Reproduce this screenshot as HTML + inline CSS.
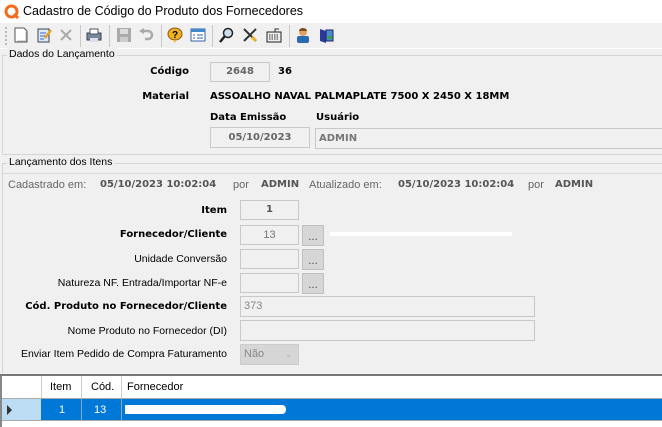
<!DOCTYPE html>
<html><head><meta charset="utf-8"><style>
*{margin:0;padding:0;box-sizing:border-box}
body{width:662px;height:427px;background:#f0f0f0;position:relative;overflow:hidden;font-family:"DejaVu Sans",Verdana,sans-serif;font-size:11px;color:#000}
.a{position:absolute}
.t{font-family:"Liberation Sans",Arial,sans-serif;font-size:11px}
.b{font-weight:bold;font-size:10px;font-family:"DejaVu Sans",Verdana,sans-serif}
.box{position:absolute;border:1px solid #c8c8c8;background:#f0f0f0}
.btn{position:absolute;background:#d6d6d6;border:1px solid #c0c0c0;width:22px;height:21px;text-align:center;font-size:10px;line-height:24px;color:#444}
.ic{position:absolute;top:27px;width:16px;height:16px}
.sep{position:absolute;top:25px;width:1px;height:22px;background:#c8c8c8}
.r{text-align:right}
.l{font-size:10.5px}
</style></head><body>
<div class="a" style="left:0;top:0;width:662px;height:23px;background:#fff"></div>
<svg class="a" style="left:4px;top:4px" width="16" height="16"><circle cx="7.5" cy="7.5" r="5.5" fill="none" stroke="#f26a1b" stroke-width="3"/><path d="M10 10l4 4" stroke="#f26a1b" stroke-width="3"/></svg>
<div class="a t" style="left:23px;top:4px;font-size:12.5px">Cadastro de Código do Produto dos Fornecedores</div>
<div class="a" style="left:0;top:23px;width:662px;height:26px;background:#f0f0f0;border-bottom:1px solid #fff"></div>
<div class="a" style="left:5px;top:27px;width:2px;height:18px;border-left:2px dotted #bbb"></div>
<svg class="ic" style="left:13px"><path d="M2 1h9l3 3v11H2z" fill="#fff" stroke="#555"/><path d="M4 14h9V5" stroke="#bbb" fill="none"/></svg>
<svg class="ic" style="left:36px"><path d="M2 2h11v13H2z" fill="#dfe8f5" stroke="#345"/><path d="M4 6h6M4 9h6M4 12h4" stroke="#36c"/><path d="M9 11l6-8" stroke="#e8a020" stroke-width="2.5"/></svg>
<svg class="ic" style="left:58px"><path d="M3 3l10 10M13 3L3 13" stroke="#aaa" stroke-width="2"/></svg>
<div class="sep" style="left:80px"></div>
<svg class="ic" style="left:86px"><rect x="1" y="6" width="14" height="7" fill="#789" stroke="#345"/><rect x="4" y="2" width="8" height="5" fill="#fff" stroke="#556"/><rect x="4" y="11" width="8" height="4" fill="#dde"/></svg>
<div class="sep" style="left:109px"></div>
<svg class="ic" style="left:116px"><rect x="1" y="1" width="14" height="14" fill="#aaa"/><rect x="4" y="2" width="8" height="5" fill="#ddd"/><rect x="4" y="10" width="8" height="5" fill="#ccc"/></svg>
<svg class="ic" style="left:138px"><path d="M5 4h5a4 4 0 010 8H7" fill="none" stroke="#aaa" stroke-width="2.5"/><path d="M1 4l5-3v6z" fill="#aaa"/></svg>
<div class="sep" style="left:161px"></div>
<svg class="ic" style="left:167px"><ellipse cx="8" cy="7" rx="7" ry="6" fill="#f0b020" stroke="#8a5a10"/><path d="M6 13l2 3 1-3" fill="#f0b020"/><text x="5" y="11" font-size="10" font-weight="bold" font-family="Liberation Sans">?</text></svg>
<svg class="ic" style="left:190px"><rect x="1" y="2" width="14" height="12" fill="#fff" stroke="#36a"/><rect x="1" y="2" width="14" height="3" fill="#48c"/><path d="M3 8h2M7 8h6M3 11h2M7 11h6" stroke="#36a"/></svg>
<div class="sep" style="left:212px"></div>
<svg class="ic" style="left:218px"><circle cx="10" cy="6" r="4.5" fill="#cde" stroke="#222" stroke-width="1.5"/><path d="M7 9l-5 6" stroke="#222" stroke-width="2.5"/></svg>
<svg class="ic" style="left:242px"><path d="M2 2l12 12M14 2L2 14" stroke="#333" stroke-width="2"/><path d="M10 10l4 4" stroke="#e8b020" stroke-width="3"/></svg>
<svg class="ic" style="left:266px"><rect x="1" y="5" width="14" height="10" fill="#eee" stroke="#222"/><path d="M3 8h10M3 10h10M3 12h10" stroke="#333" stroke-dasharray="1.5 1"/><path d="M9 5V2h4" stroke="#333" fill="none"/></svg>
<div class="sep" style="left:289px"></div>
<svg class="ic" style="left:295px"><circle cx="8" cy="5" r="4" fill="#e0a060"/><path d="M4 4a4 3 0 018 0" fill="#7a4a20"/><rect x="2" y="9" width="12" height="7" rx="2" fill="#2a6ab0"/></svg>
<svg class="ic" style="left:318px"><path d="M2 2l6 2v12l-6-2z" fill="#2a3a9a"/><rect x="8" y="3" width="7" height="11" fill="#4a8ad0" stroke="#226"/><path d="M9 12l3-4 3 4z" fill="#3a3"/></svg>

<!-- group 1 -->
<div class="a" style="left:2px;top:55px;width:680px;height:100px;border:1px solid #d5d5d5;border-right:none"></div>
<div class="a t l" style="left:7px;top:48px;background:#f0f0f0;padding:0 2px">Dados do Lançamento</div>
<div class="a b r" style="left:100px;top:66px;width:89px">Código</div>
<div class="box b" style="left:210px;top:62px;width:60px;height:20px;text-align:center;line-height:18px;color:#666">2648</div>
<div class="a b" style="left:278px;top:66px">36</div>
<div class="a b r" style="left:100px;top:91px;width:89px">Material</div>
<div class="a b" style="left:210px;top:91px">ASSOALHO NAVAL PALMAPLATE 7500 X 2450 X 18MM</div>
<div class="a b" style="left:210px;top:112px">Data Emissão</div>
<div class="a b" style="left:316px;top:112px">Usuário</div>
<div class="box b" style="left:210px;top:127px;width:100px;height:21px;text-align:center;line-height:19px;color:#666">05/10/2023</div>
<div class="box b" style="left:315px;top:128px;width:360px;height:21px;line-height:19px;padding-left:3px;color:#777">ADMIN</div>

<!-- group 2 -->
<div class="a" style="left:2px;top:163px;width:680px;height:1px;background:#d5d5d5"></div>
<div class="a" style="left:2px;top:163px;width:1px;height:210px;background:#d5d5d5"></div>
<div class="a t l" style="left:7px;top:156px;background:#f0f0f0;padding:0 2px">Lançamento dos Itens</div>
<div class="a" style="left:3px;top:173px;width:680px;height:1px;background:#d8d8d8"></div>
<div class="a t" style="left:8px;top:179px;color:#666">Cadastrado em:</div>
<div class="a b" style="left:100px;top:179px;color:#555">05/10/2023 10:02:04</div>
<div class="a t" style="left:233px;top:179px;color:#666">por</div>
<div class="a b" style="left:261px;top:179px;color:#555">ADMIN</div>
<div class="a t" style="left:309px;top:179px;color:#666">Atualizado em:</div>
<div class="a b" style="left:398px;top:179px;color:#555">05/10/2023 10:02:04</div>
<div class="a t" style="left:528px;top:179px;color:#666">por</div>
<div class="a b" style="left:555px;top:179px;color:#555">ADMIN</div>

<div class="a b r" style="left:0;top:205px;width:227px">Item</div>
<div class="box b" style="left:240px;top:200px;width:59px;height:20px;text-align:center;line-height:18px;color:#555">1</div>
<div class="a b r" style="left:0;top:229px;width:227px">Fornecedor/Cliente</div>
<div class="box t" style="left:240px;top:225px;width:59px;height:20px;text-align:center;line-height:18px;color:#777">13</div>
<div class="btn" style="left:302px;top:225px">...</div>
<div class="a" style="left:330px;top:232px;width:182px;height:4px;background:#fff"></div>
<div class="a t r l" style="left:0;top:253px;width:227px">Unidade Conversão</div>
<div class="box" style="left:240px;top:249px;width:59px;height:20px"></div>
<div class="btn" style="left:302px;top:249px">...</div>
<div class="a t r l" style="left:0;top:277px;width:227px">Natureza NF. Entrada/Importar NF-e</div>
<div class="box" style="left:240px;top:273px;width:59px;height:20px"></div>
<div class="btn" style="left:302px;top:273px">...</div>
<div class="a b r" style="left:0;top:301px;width:227px">Cód. Produto no Fornecedor/Cliente</div>
<div class="box t" style="left:240px;top:296px;width:295px;height:21px;line-height:19px;padding-left:3px;color:#888">373</div>
<div class="a t r l" style="left:0;top:325px;width:227px">Nome Produto no Fornecedor (DI)</div>
<div class="box" style="left:240px;top:320px;width:295px;height:21px"></div>
<div class="a t r l" style="left:0;top:348px;width:227px">Enviar Item Pedido de Compra Faturamento</div>
<div class="a t" style="left:240px;top:344px;width:59px;height:21px;background:#d6d6d6;border:1px solid #ccc;line-height:19px;padding-left:3px;color:#888">Não<span style="position:absolute;left:44px;top:0;color:#aaa;font-size:9px">&#8964;</span></div>

<!-- grid -->
<div class="a" style="left:0;top:374px;width:662px;height:53px;background:#fff;border-top:2px solid #777"></div>
<div class="a" style="left:0;top:376px;width:2px;height:51px;background:#888"></div>
<div class="a" style="left:41px;top:376px;width:1px;height:22px;background:#ccc"></div>
<div class="a" style="left:81px;top:376px;width:1px;height:22px;background:#ccc"></div>
<div class="a" style="left:121px;top:376px;width:1px;height:22px;background:#ccc"></div>
<div class="a t" style="left:50px;top:381px">Item</div>
<div class="a t" style="left:91px;top:381px">Cód.</div>
<div class="a t" style="left:127px;top:381px">Fornecedor</div>
<div class="a" style="left:2px;top:398px;width:660px;height:1px;background:#aaa"></div>
<div class="a" style="left:2px;top:399px;width:39px;height:21px;background:#bcdcf4"></div>
<div class="a" style="left:7px;top:405px;width:0;height:0;border-left:5px solid #333;border-top:5px solid transparent;border-bottom:5px solid transparent"></div>
<div class="a" style="left:41px;top:399px;width:621px;height:21px;background:#0078d7"></div>
<div class="a" style="left:81px;top:399px;width:1px;height:21px;background:#8ab"></div>
<div class="a" style="left:121px;top:399px;width:1px;height:21px;background:#8ab"></div>
<div class="a t" style="left:59px;top:404px;color:#fff">1</div>
<div class="a t" style="left:94px;top:404px;color:#fff">13</div>
<div class="a" style="left:125px;top:405px;width:161px;height:9px;background:#fff;border-radius:0 4px 4px 0"></div>
<div class="a" style="left:2px;top:420px;width:660px;height:1px;background:#aaa"></div>
</body></html>
